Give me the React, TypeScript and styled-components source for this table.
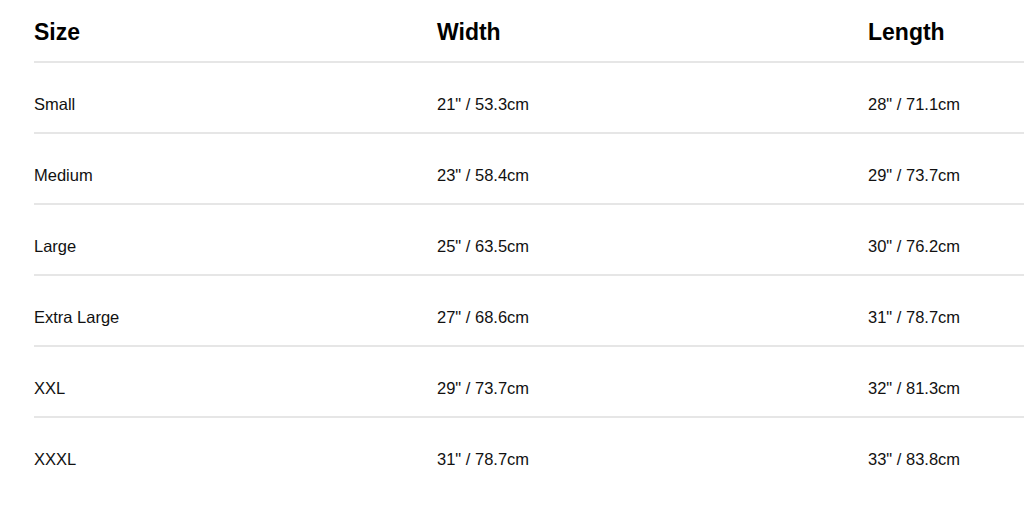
import React from "react";
import styled, { createGlobalStyle } from "styled-components";

const Global = createGlobalStyle`
  html, body { margin: 0; padding: 0; background: #fff; overflow: hidden; }
  body { font-family: "Liberation Sans", Arial, Helvetica, sans-serif; color: #111; }
`;

const Wrap = styled.div`
  padding-left: 34px;
`;

const Row = styled.div<{ $head?: boolean; $last?: boolean }>`
  display: grid;
  grid-template-columns: 403px 431px 1fr;
  border-bottom: ${(p) => (p.$last ? "none" : "2px solid #e6e6e6")};
  padding: ${(p) => (p.$head ? "20px 0 17px" : "32px 0 19px")};
`;

const HeadCell = styled.div`
  font-size: 23px;
  font-weight: 700;
  line-height: 24px;
  color: #000;
`;

const Cell = styled.div`
  font-size: 16.5px;
  line-height: 18px;
  color: #111;
`;

const rows = [
  ["Small", `21" / 53.3cm`, `28" / 71.1cm`],
  ["Medium", `23" / 58.4cm`, `29" / 73.7cm`],
  ["Large", `25" / 63.5cm`, `30" / 76.2cm`],
  ["Extra Large", `27" / 68.6cm`, `31" / 78.7cm`],
  ["XXL", `29" / 73.7cm`, `32" / 81.3cm`],
  ["XXXL", `31" / 78.7cm`, `33" / 83.8cm`],
];

export default function App() {
  return (
    <>
      <Global />
      <Wrap>
        <Row $head>
          <HeadCell>Size</HeadCell>
          <HeadCell>Width</HeadCell>
          <HeadCell>Length</HeadCell>
        </Row>
        {rows.map((r, i) => (
          <Row key={r[0]} $last={i === rows.length - 1}>
            {r.map((c, j) => (
              <Cell key={j}>{c}</Cell>
            ))}
          </Row>
        ))}
      </Wrap>
    </>
  );
}
